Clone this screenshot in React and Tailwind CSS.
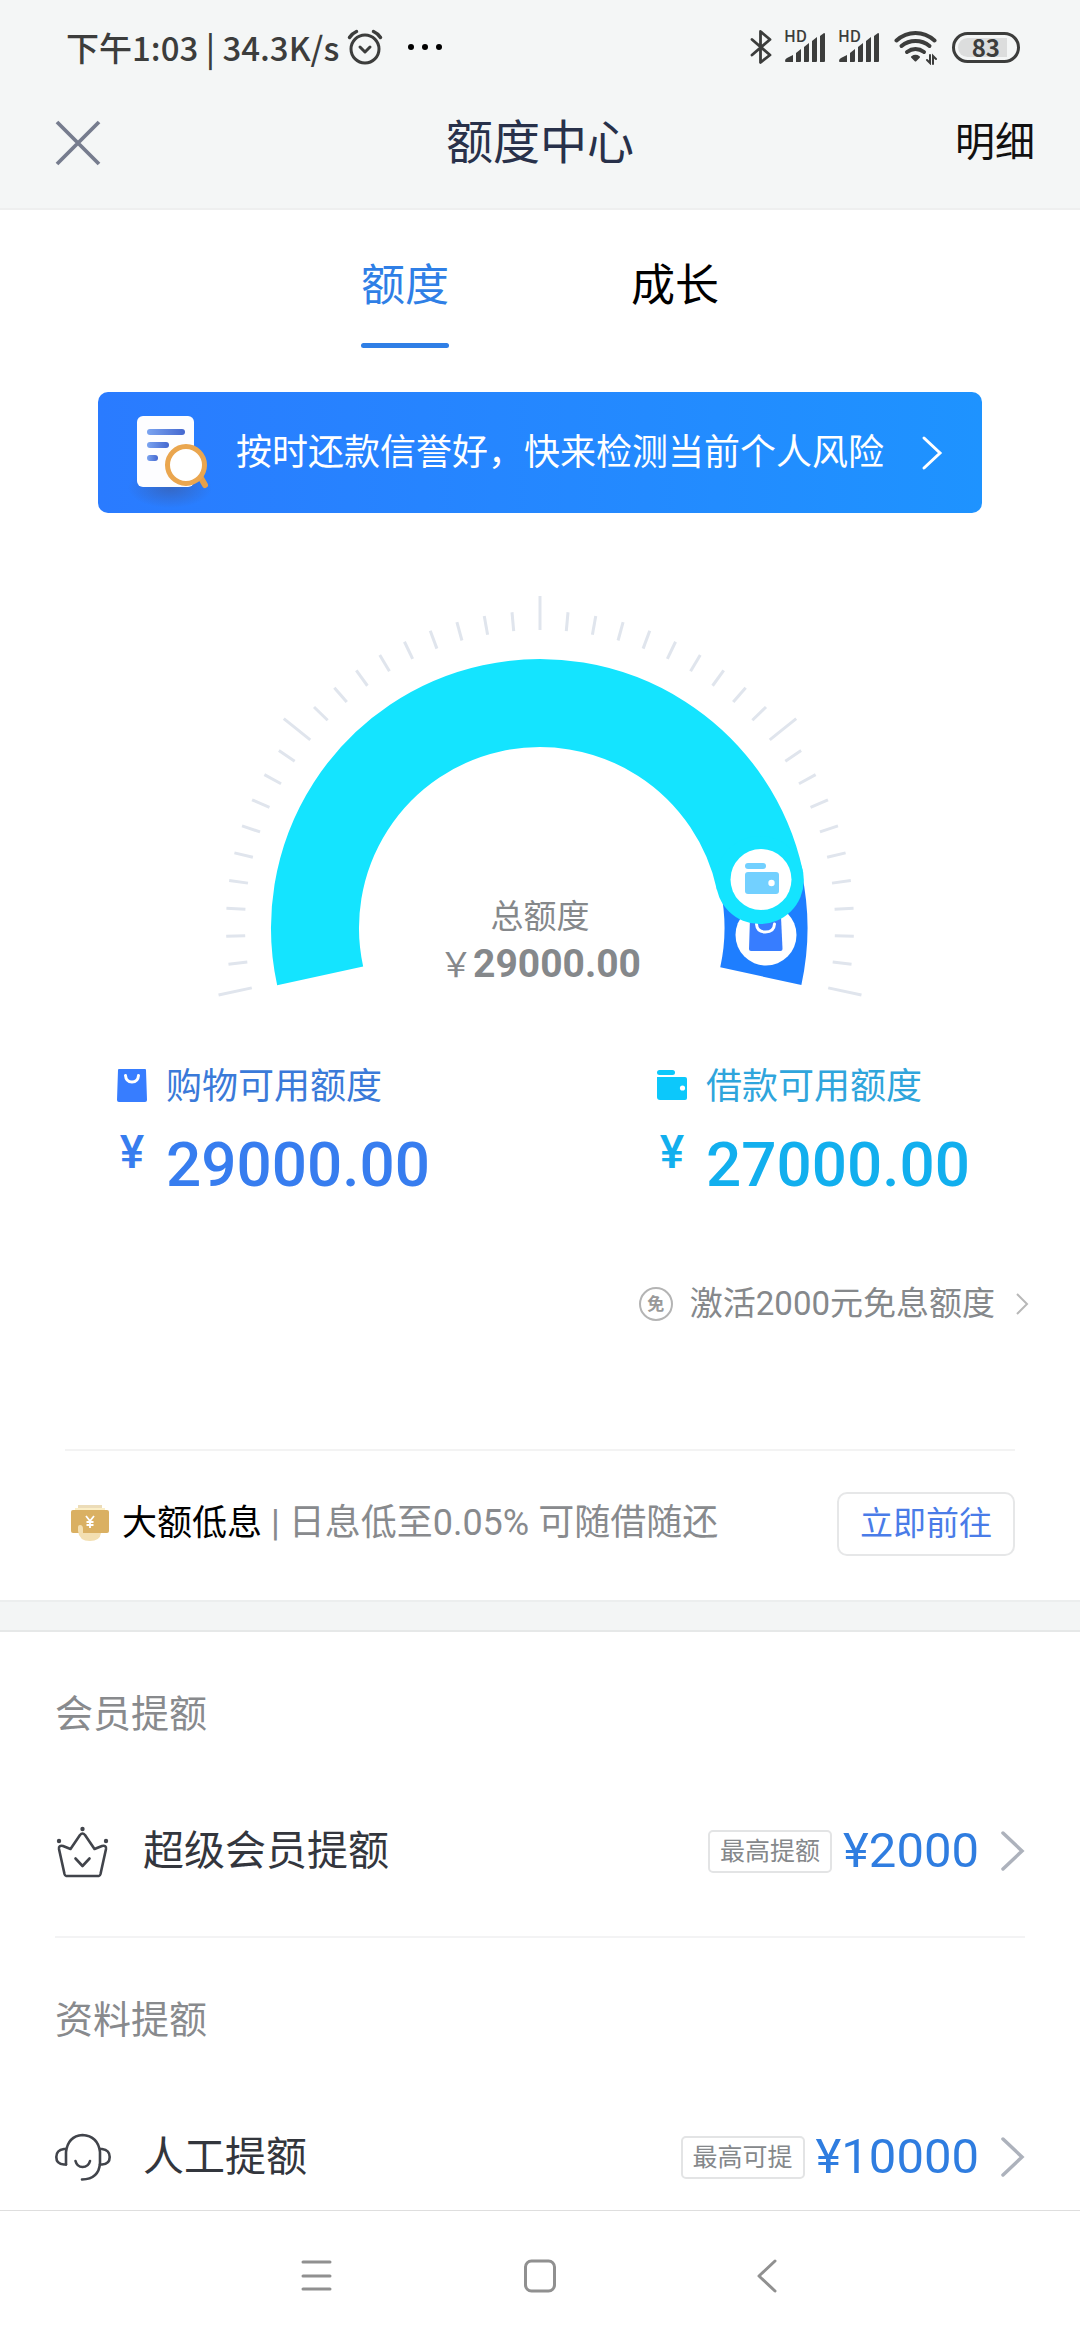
import React, { useState } from 'react';

const CX = 540;
const CY = 928;
const TICK_CY = 925;
const START = 192.3;
const STEP = 5.115;

function polar(radius, deg, cy = CY) {
    const rad = (deg * Math.PI) / 180;
    return { x: CX + radius * Math.cos(rad), y: cy - radius * Math.sin(rad) };
}

function arcPath(radius, from, to) {
    const a = polar(radius, from);
    const b = polar(radius, to);
    const large = Math.abs(from - to) > 180 ? 1 : 0;
    return `M${a.x} ${a.y} A${radius} ${radius} 0 ${large} 1 ${b.x} ${b.y}`;
}

function SignalIcon() {
    return (
        <span className="relative block h-[34px] w-[42px]">
            <span className="absolute -top-[3px] left-0 text-[16px] leading-[16px] font-medium">HD</span>
            <svg viewBox="0 0 42 34" className="absolute inset-0 h-full w-full" fill="currentColor" aria-hidden="true">
                <path d="M1 31 Q1 29 3 28 L9 25 V32 H2 Q1 32 1 31Z" />
                <path d="M12 23 L17 19 V31 Q17 32 16 32 H12Z" />
                <path d="M20 17 L25 13 V31 Q25 32 24 32 H20Z" />
                <path d="M28 11 L33 7 V31 Q33 32 32 32 H28Z" />
                <path d="M36 6 L40 3 Q41 3 41 4 V31 Q41 32 40 32 H36Z" />
            </svg>
        </span>
    );
}

function StatusBar() {
    return (
        <div className="flex h-[94px] items-center justify-between pr-[60px] pl-[66px] font-['Noto_Sans_CJK_SC',sans-serif] text-[#3c3d3c]">
            <div className="flex items-center">
                <span className="text-[33px] leading-[40px] font-medium whitespace-pre">下午1:03 | 34.3K/s</span>
                <svg viewBox="0 0 36 36" className="ml-2 h-9 w-9" fill="none" stroke="currentColor" strokeWidth="3" strokeLinecap="round" aria-hidden="true">
                    <circle cx="18" cy="20" r="14" />
                    <path d="M13 18 L18 23 L23 18" strokeLinejoin="round" />
                    <path d="M2.500 8.500 Q5 4.500 9.500 2.500 M33.500 8.500 Q31 4.500 26.500 2.500" strokeWidth="3.500" />
                </svg>
                <svg viewBox="0 0 36 8" className="ml-6 h-2 w-9 text-black" fill="currentColor" aria-hidden="true">
                    <circle cx="4" cy="4" r="3" />
                    <circle cx="18" cy="4" r="3" />
                    <circle cx="32" cy="4" r="3" />
                </svg>
            </div>
            <div className="flex items-center">
                <svg viewBox="0 0 22 36" className="h-9 w-[22px]" fill="none" stroke="currentColor" strokeWidth="2.800" strokeLinejoin="round" strokeLinecap="round" aria-hidden="true">
                    <path d="M2 10.500 L20 26 L10.500 33.500 V2.500 L20 10.500 L2 26" />
                </svg>
                <span className="ml-3"><SignalIcon /></span>
                <span className="ml-3"><SignalIcon /></span>
                <svg viewBox="0 0 44 36" className="ml-[14px] h-9 w-11" fill="none" stroke="currentColor" strokeWidth="4" strokeLinecap="round" aria-hidden="true">
                    <path d="M2.500 11.500 Q11 4 21.500 4 Q32 4 40.500 11.500" />
                    <path d="M7.500 17 Q13.500 12 21.500 12 Q29.500 12 35.500 17" />
                    <path d="M13 23 Q17 20 21.500 20 Q26 20 30 23" />
                    <path d="M18 28 Q21.500 25.500 25 28 L21.500 31.500Z" fill="currentColor" strokeWidth="2" strokeLinejoin="round" />
                    <path d="M36 26 V34 L33 31 M39 35 V27 L42 30" strokeWidth="2" />
                </svg>
                <span className="ml-[14px] flex h-[31px] w-[68px] items-center rounded-full border-3 border-current p-[3px]">
                    <span className="flex h-[19px] w-[49px] items-center justify-end rounded-l-full bg-[#dcdddd] pr-[7px] text-[24px] leading-[24px] font-bold">83</span>
                </span>
            </div>
        </div>
    );
}

function Header() {
    return (
        <header className="border-b-2 border-[#eeefef] bg-[#f4f6f6]">
            <StatusBar />
            <div className="mb-4 grid h-[98px] grid-cols-3 items-center px-[45px]">
                <button type="button" aria-label="关闭" className="justify-self-start px-[9px]">
                    <svg viewBox="0 0 48 48" className="h-12 w-12" fill="none" stroke="#767c8e" strokeWidth="3.800" aria-hidden="true">
                        <path d="M3 3 L45 45 M45 3 L3 45" />
                    </svg>
                </button>
                <h1 className="justify-self-center text-[47px] leading-[60px] whitespace-nowrap text-[#28314a]">额度中心</h1>
                <button type="button" className="justify-self-end text-[40px] leading-[60px] text-[#111]">明细</button>
            </div>
        </header>
    );
}

function Tabs({ active, onChange }) {
    return (
        <nav className="flex justify-center gap-[182px] pt-[46px]">
            {['额度', '成长'].map((name) => (
                <button key={name} type="button" onClick={() => onChange(name)} className={`flex flex-col items-center text-[44px] leading-[60px] ${active === name ? 'text-[#2f7fe6]' : 'text-black'}`}>
                    {name}
                    <span className={`mt-[27px] h-[5px] w-[88px] rounded-sm ${active === name ? 'bg-[#2f7fe6]' : 'bg-transparent'}`} />
                </button>
            ))}
        </nav>
    );
}

function Banner() {
    return (
        <a href="#risk" className="mx-[98px] mt-[44px] flex h-[121px] items-center rounded-[10px] bg-linear-to-r from-[#2a7bff] to-[#1e93ff] pr-[38px] pl-[36px] text-white">
            <svg viewBox="0 0 84 90" className="h-[90px] w-[84px] shrink-0 overflow-visible" aria-hidden="true">
                <defs>
                    <linearGradient id="docLine" x1="0" x2="1">
                        <stop offset="0" stopColor="#7ba4f0" />
                        <stop offset="1" stopColor="#4467cf" />
                    </linearGradient>
                    <radialGradient id="docShade">
                        <stop offset="0" stopColor="#3a5fae" stopOpacity="0.700" />
                        <stop offset="1" stopColor="#3a5fae" stopOpacity="0" />
                    </radialGradient>
                </defs>
                <ellipse cx="36" cy="80" rx="42" ry="20" fill="url(#docShade)" />
                <rect x="3" y="8" width="57" height="71" rx="6" fill="#fdfdff" />
                <rect x="13" y="21" width="38" height="6" rx="3" fill="url(#docLine)" />
                <rect x="13" y="34" width="22" height="6" rx="3" fill="url(#docLine)" />
                <rect x="13" y="47" width="11" height="6" rx="3" fill="url(#docLine)" />
                <path d="M67 70 L71 77" stroke="#e5a04a" strokeWidth="6" strokeLinecap="round" />
                <circle cx="52" cy="57" r="18.500" fill="#fff" stroke="#eaa64f" strokeWidth="5" />
            </svg>
            <span className="ml-[18px] flex-1 text-[36px] leading-[50px] whitespace-nowrap">按时还款信誉好，快来检测当前个人风险</span>
            <svg viewBox="0 0 24 36" className="h-9 w-6 shrink-0" fill="none" stroke="currentColor" strokeWidth="3" strokeLinecap="round" aria-hidden="true">
                <path d="M4 3 L20 18 L4 33" />
            </svg>
        </a>
    );
}

function Gauge() {
    const ticks = Array.from({ length: 41 }, (_, i) => {
        const deg = START - i * STEP;
        return { inner: polar(295, deg, TICK_CY), outer: polar(i % 10 === 0 ? 329 : 314, deg, TICK_CY) };
    });
    const cap = polar(225, 12.3);

    return (
        <div className="relative mx-auto mt-[77px] w-[680px]">
            <svg viewBox="200 590 680 408" className="block w-full" aria-hidden="true">
                {ticks.map((t, i) => (
                    <line key={i} x1={t.inner.x} y1={t.inner.y} x2={t.outer.x} y2={t.outer.y} stroke="#e0e5ed" strokeWidth="3" />
                ))}
                {/* shopping part, hidden under the end of the loan arc */}
                <path d={arcPath(226, 12, -12.3)} fill="none" stroke="#1e7eff" strokeWidth="83" />
                <circle cx="766" cy="935" r="30.500" fill="#fff" />
                <path d="M750 917 H781 L782.500 949 Q782.500 951 780.500 951 H751 Q749 951 749 949Z" fill="#377dff" />
                <path d="M756.500 924 Q757 932 765.500 932 Q774 932 774.500 924" fill="none" stroke="#fff" strokeWidth="3" strokeLinecap="round" />
                <path d={arcPath(225, START, 12.3)} fill="none" stroke="#14e4ff" strokeWidth="88" />
                <circle cx={cap.x} cy={cap.y} r="44" fill="#14e4ff" />
                <circle cx="761" cy="879.500" r="30.500" fill="#fff" />
                <rect x="745" y="863" width="21" height="6" rx="3" fill="#72d0ff" />
                <rect x="745" y="872" width="34" height="22" rx="3" fill="#72d0ff" />
                <circle cx="771.500" cy="883" r="3.200" fill="#fff" />
            </svg>
            <div className="absolute inset-x-0 bottom-[9px] flex flex-col items-center text-[#85888b]">
                <span className="text-[33px] leading-[46px]">总额度</span>
                <span className="text-[39px] leading-[48px] font-bold">
                    <span className="text-[34px] font-normal">￥</span>29000.00
                </span>
            </div>
        </div>
    );
}

function BagIcon() {
    return (
        <svg viewBox="0 0 32 36" className="h-9 w-8" aria-hidden="true">
            <path d="M3 0 H29 Q30 0 30 1 L31 31 Q31 33 29 33 H3 Q1 33 1 31 L2 1 Q2 0 3 0Z" fill="#377dff" />
            <path d="M9.500 6.500 Q10 13 16 13 Q22 13 22.500 6.500" fill="none" stroke="#fff" strokeWidth="3" strokeLinecap="round" />
        </svg>
    );
}

function WalletIcon() {
    return (
        <svg viewBox="0 0 32 36" className="h-9 w-8" fill="#0cc8fb" aria-hidden="true">
            <rect x="1" y="1" width="18" height="5" rx="2.500" />
            <path d="M1 8 H29 Q31 8 31 10 V29 Q31 31 29 31 H4 Q1 31 1 28Z" />
            <circle cx="26.500" cy="19" r="2.600" fill="#fff" />
        </svg>
    );
}

function Limit({ icon, label, amount, labelColor, amountColor }) {
    return (
        <div className="grid grid-cols-[32px_auto] justify-start gap-x-[18px]">
            <span className="flex items-center">{icon}</span>
            <span className={`text-[36px] leading-[44px] ${labelColor}`}>{label}</span>
            <span className={`mt-[16px] justify-self-center text-[46px] leading-[54px] font-medium ${amountColor}`}>¥</span>
            <span className={`mt-[24px] text-[62px] leading-[64px] font-medium ${amountColor}`}>{amount}</span>
        </div>
    );
}

function CrownIcon() {
    return (
        <svg viewBox="0 0 56 56" className="h-14 w-14" fill="none" stroke="#41444b" strokeWidth="2.600" strokeLinejoin="round" strokeLinecap="round" aria-hidden="true">
            <path d="M11 53 Q10 53 9.500 51 L4 26 Q3.500 22 8 23 L15.500 26 L25 12 Q27.500 9 30 12 L39.500 26 L47 23 Q51.500 22 51 26 L45.500 51 Q45 53 44 53Z" />
            <path d="M20.500 35.500 L27.500 43 L34.500 35.500" />
            <g fill="#41444b" stroke="none">
                <circle cx="27.500" cy="6" r="2.200" />
                <circle cx="4" cy="18" r="2.200" />
                <circle cx="51" cy="18" r="2.200" />
            </g>
        </svg>
    );
}

function HeadsetIcon() {
    return (
        <svg viewBox="0 0 56 56" className="h-14 w-14" fill="none" stroke="#41444b" strokeWidth="2.600" strokeLinecap="round" aria-hidden="true">
            <path d="M11 35.500 V23 Q13 7 27.500 6 Q43 7 45 23 V34 Q44 50 27 50.500" />
            <path d="M11 20 H9 Q1.300 21 1.300 28 Q1.300 35 9 35.500 H11" />
            <path d="M45 20 H47 Q54.700 21 54.700 28 Q54.700 35 47 35.500 H45" />
            <path d="M20.500 32 Q22 38 27.500 38 Q33.500 38 35 32" />
        </svg>
    );
}

function RaiseSection({ title, icon, name, tag, amount }) {
    return (
        <section className="mx-[55px] border-b-2 border-[#f3f3f4] pt-[55px] pb-[50px] last:border-b-0 last:pb-0">
            <h2 className="text-[38px] leading-[54px] text-[#888a8d]">{title}</h2>
            <a href="#raise" className="mt-[75px] flex h-[70px] items-center">
                {icon}
                <span className="ml-[32px] flex-1 text-[41px] leading-[60px] text-[#33363d]">{name}</span>
                <span className="rounded-[5px] border-2 border-[#e3e4e5] px-[10px] text-[25px] leading-[39px] text-[#85888b]">{tag}</span>
                <span className="ml-[11px] text-[49px] leading-[60px] text-[#2f7de0]">{amount}</span>
                <svg viewBox="0 0 26 44" className="ml-[20px] h-11 w-[26px]" fill="none" stroke="#adb2bc" strokeWidth="3.500" strokeLinecap="round" aria-hidden="true">
                    <path d="M4 4 L23 22 L4 40" />
                </svg>
            </a>
        </section>
    );
}

function NavBar() {
    return (
        <nav className="flex h-[130px] shrink-0 items-center justify-center gap-[190px] border-t border-[#dedede] bg-white text-[#909090]">
            <button type="button" aria-label="菜单">
                <svg viewBox="0 0 34 36" className="h-9 w-[34px]" stroke="currentColor" strokeWidth="3" strokeLinecap="round" aria-hidden="true">
                    <path d="M4 4 H31 M4 18 H31 M4 31 H31" />
                </svg>
            </button>
            <button type="button" aria-label="主页">
                <svg viewBox="0 0 34 36" className="h-9 w-[34px]" fill="none" stroke="currentColor" strokeWidth="3" aria-hidden="true">
                    <rect x="2.500" y="3" width="29" height="30" rx="6" />
                </svg>
            </button>
            <button type="button" aria-label="返回">
                <svg viewBox="0 0 34 36" className="h-9 w-[34px]" fill="none" stroke="currentColor" strokeWidth="3" strokeLinecap="round" strokeLinejoin="round" aria-hidden="true">
                    <path d="M28 3 L12 18 L28 33" />
                </svg>
            </button>
        </nav>
    );
}

export default function App() {
    const [tab, setTab] = useState('额度');

    return (
        <div className="flex h-screen flex-col bg-white font-['Roboto','Noto_Sans_CJK_SC',sans-serif]">
            <Header />
            <main className="min-h-0 flex-1 overflow-hidden">
                <Tabs active={tab} onChange={setTab} />
                <Banner />
                <Gauge />

                <div className="mt-[67px] grid grid-cols-2 pl-[116px]">
                    <Limit icon={<BagIcon />} label="购物可用额度" amount="29000.00" labelColor="text-[#3a7ad9]" amountColor="text-[#377def]" />
                    <div className="ml-[58px]">
                        <Limit icon={<WalletIcon />} label="借款可用额度" amount="27000.00" labelColor="text-[#2fa5dc]" amountColor="text-[#12afee]" />
                    </div>
                </div>

                <a href="#activate" className="mt-[85px] mr-[51px] flex items-center justify-end text-[33px] leading-[44px] text-[#85888b]">
                    <span className="flex h-[34px] w-[34px] items-center justify-center rounded-full border-2 border-[#b4b4b4] text-[17px] leading-[17px] font-bold text-[#999]">免</span>
                    <span className="ml-[17px]">激活2000元免息额度</span>
                    <svg viewBox="0 0 14 24" className="ml-[20px] h-6 w-[14px]" fill="none" stroke="#b8b8b8" strokeWidth="2" aria-hidden="true">
                        <path d="M2 2 L12 12 L2 22" />
                    </svg>
                </a>

                <div className="mx-[65px] mt-[123px] flex items-center border-t-2 border-[#f3f3f3] pt-[41px] pb-[44px]">
                    <svg viewBox="0 0 40 38" className="ml-[5px] h-[38px] w-10" aria-hidden="true">
                        <rect x="8" y="0" width="24" height="5" fill="#ecdcb8" />
                        <rect x="5" y="3" width="30" height="3" fill="#fbeec6" />
                        <rect x="1" y="5" width="38" height="23" rx="2" fill="#dab062" />
                        <path d="M8 22 Q8 20 10 20 Q13 20 13 24 V28 H31 Q30 36 20 36 Q9 36 8 26Z" fill="#f3dfb1" />
                        <path d="M16 11 L20 16 L24 11 M20 16 V23 M16.500 17 H23.500 M16.500 20 H23.500" stroke="#fff" strokeWidth="1.800" fill="none" />
                    </svg>
                    <p className="ml-[12px] flex-1 pb-[2px] text-[36px] leading-[50px] whitespace-nowrap text-[#888a8d]">
                        <span className="text-[35px] text-black">大额低息</span> | 日息低至0.05% 可随借随还
                    </p>
                    <button type="button" className="h-[64px] rounded-[10px] border-2 border-[#e6e7e8] px-[21px] text-[33px] leading-[60px] text-[#4a7ce8]">立即前往</button>
                </div>

                <div className="h-[32px] border-y-2 border-t-[#eceeee] border-b-[#e6e8e8] bg-[#f3f5f5]" />

                <RaiseSection title="会员提额" icon={<CrownIcon />} name="超级会员提额" tag="最高提额" amount="¥2000" />
                <RaiseSection title="资料提额" icon={<HeadsetIcon />} name="人工提额" tag="最高可提" amount="¥10000" />
            </main>
            <NavBar />
        </div>
    );
}
